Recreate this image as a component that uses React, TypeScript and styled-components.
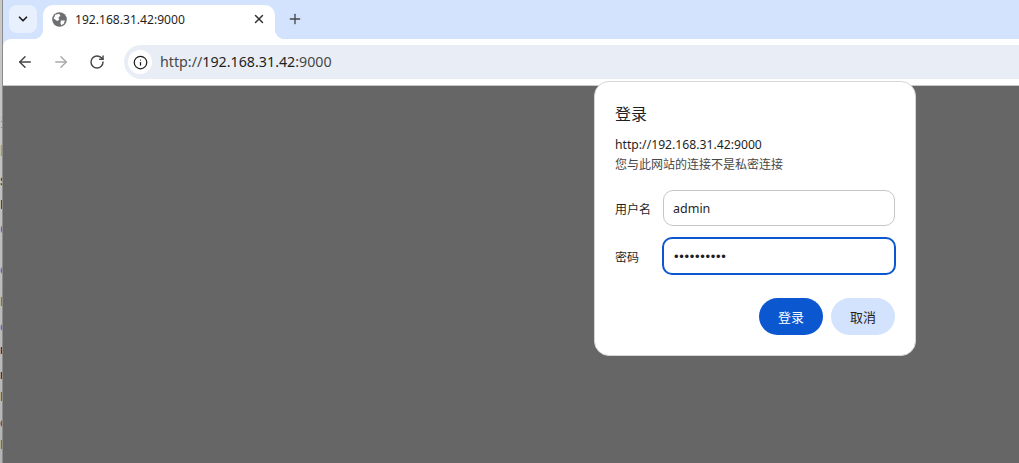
import React from 'react';
import styled, { createGlobalStyle } from 'styled-components';
import { ArrowLeft, ArrowRight, ChevronDown, Info, Plus, RotateCw, X } from 'lucide-react';

const GlobalStyle = createGlobalStyle`
  html, body {
    margin: 0;
    padding: 0;
    height: 100%;
    overflow: hidden;
    background: #666666;
    font-family: "Roboto", "Noto Sans CJK SC", "Liberation Sans", sans-serif;
  }
`;

const Screen = styled.div`
  position: relative;
  display: flex;
  width: 1019px;
  height: 463px;
  overflow: hidden;
`;

// sliver of the window behind the browser
const BackWindow = styled.div`
  width: 2px;
  flex: none;
  padding-top: 117px;
  display: flex;
  flex-direction: column;
  overflow: hidden;
  background: linear-gradient(#c9c9c9, #b4b4b4);
  border-right: 1px solid #8d8d8d;
`;

const BackGlyph = styled.span<{ $color: string; $gap: number }>`
  margin-top: ${(p) => p.$gap}px;
  font-size: 13px;
  line-height: 12px;
  height: 12px;
  color: ${(p) => p.$color};
`;

const Browser = styled.div`
  flex: 1;
  display: flex;
  flex-direction: column;
  min-width: 0;
  background: #d3e3fd;
`;

const TabStrip = styled.div`
  height: 39px;
  flex: none;
  display: flex;
  align-items: flex-end;
  padding-left: 6px;
`;

const TabSearch = styled.button`
  width: 28px;
  height: 28px;
  margin: 0 6px 6px 0;
  padding: 0;
  border: 0;
  border-radius: 8px;
  background: #e9f0fd;
  color: #1f1f1f;
  display: flex;
  align-items: center;
  justify-content: center;
`;

const Tab = styled.div`
  position: relative;
  width: 232px;
  height: 34px;
  box-sizing: border-box;
  padding: 0 9px 6px 9px;
  display: flex;
  align-items: center;
  background: #fff;
  border-radius: 10px 10px 0 0;

  &::before,
  &::after {
    content: '';
    position: absolute;
    bottom: 0;
    width: 10px;
    height: 10px;
  }
  &::before {
    right: 100%;
    background: radial-gradient(circle at 0 0, transparent 10px, #fff 10.5px);
  }
  &::after {
    left: 100%;
    background: radial-gradient(circle at 100% 0, transparent 10px, #fff 10.5px);
  }
`;

const TabTitle = styled.span`
  flex: 1;
  margin-left: 8px;
  font-size: 12.1px;
  color: #1f1f1f;
  font-family: "Noto Sans", "Open Sans", sans-serif;
`;

const NewTab = styled.div`
  margin: 0 0 6px 12px;
  height: 28px;
  display: flex;
  align-items: center;
  color: #444746;
`;

const Toolbar = styled.div`
  height: 47px;
  flex: none;
  box-sizing: border-box;
  display: flex;
  align-items: center;
  padding-left: 13px;
  background: #fff;
  border-top-left-radius: 8px;
  border-bottom: 1px solid #c8c8c8;
`;

const NavIcon = styled.div<{ $dim?: boolean }>`
  width: 18px;
  height: 18px;
  margin-right: 18px;
  display: flex;
  align-items: center;
  justify-content: center;
  color: ${(p) => (p.$dim ? '#a9abad' : '#444746')};
`;

const AddressBar = styled.div`
  flex: 1;
  height: 34px;
  display: flex;
  align-items: center;
  padding-left: 4px;
  background: #e9eef6;
  border-radius: 17px 0 0 17px;
`;

const SiteInfo = styled.div`
  width: 24px;
  height: 24px;
  border-radius: 50%;
  background: #fff;
  color: #1f1f1f;
  display: flex;
  align-items: center;
  justify-content: center;
`;

const Url = styled.span`
  margin: 0 0 2px 8px;
  font-size: 14.25px;
  color: #474747;
  font-family: "Noto Sans", "Open Sans", sans-serif;
`;

const UrlHost = styled.span`
  color: #1f1f1f;
`;

const Page = styled.div`
  flex: 1;
  background: #666666;
`;

const Dialog = styled.form`
  position: absolute;
  left: 594px;
  top: 81px;
  width: 322px;
  height: 275px;
  box-sizing: border-box;
  padding: 22px 20px 0 20px;
  background: #fff;
  border: 1px solid #d6d6d6;
  border-radius: 15px;
  display: flex;
  flex-direction: column;
`;

const DialogTitle = styled.div`
  font-size: 16px;
  line-height: 22px;
  color: #1f1f1f;
`;

const Origin = styled.div`
  margin-top: 11px;
  font-size: 12.2px;
  line-height: 16px;
  color: #1f1f1f;
  font-family: "Noto Sans", "Open Sans", sans-serif;
`;

const Notice = styled.div`
  margin-top: 4px;
  font-size: 12px;
  line-height: 16px;
  color: #474747;
`;

const Fields = styled.div`
  margin-top: 17px;
  display: flex;
  flex-direction: column;
  gap: 12px;
`;

const FieldRow = styled.label`
  display: flex;
  align-items: center;
  height: 36px;
`;

const FieldLabel = styled.span`
  width: 48px;
  flex: none;
  font-size: 12px;
  color: #1f1f1f;
`;

const Input = styled.div<{ $focused?: boolean }>`
  flex: 1;
  height: ${(p) => (p.$focused ? '38px' : '36px')};
  margin: ${(p) => (p.$focused ? '0 -1px' : '0')};
  box-sizing: border-box;
  display: flex;
  align-items: center;
  padding-left: ${(p) => (p.$focused ? '10px' : '9px')};
  border: ${(p) => (p.$focused ? '2px solid #0b57d0' : '1px solid #c4c7c5')};
  border-radius: 10px;
  font-size: 12.5px;
  color: #1f1f1f;
  font-family: "Noto Sans", "Open Sans", sans-serif;
`;

const PasswordDots = styled.span`
  font-size: 13px;
  letter-spacing: 0.7px;
  font-family: "Liberation Sans", sans-serif;
  color: #1f1f1f;
`;

const Actions = styled.div`
  margin-top: 24px;
  display: flex;
  justify-content: flex-end;
  gap: 8px;
`;

const Button = styled.button<{ $primary?: boolean }>`
  width: 64px;
  height: 37px;
  padding: 0;
  border: 0;
  border-radius: 19px;
  font-size: 13px;
  font-family: "Noto Sans CJK SC", sans-serif;
  background: ${(p) => (p.$primary ? '#0b57d0' : '#d3e3fd')};
  color: ${(p) => (p.$primary ? '#fff' : '#1f1f1f')};
`;

const backGlyphs: [string, string, number][] = [
  ['录', '#777', 0],
  ['|', '#a58a3a', 15],
  ['S', '#333', 20],
  ['I', '#222', 11],
  ['G', '#36c', 13],
  ['c', '#36c', 28],
  ['I', '#8a5a20', 20],
  ['c', '#36c', 13],
  ['n', '#315', 11],
  ['n', '#315', 13],
  ['E', '#8a4a10', 10],
  ['c', '#446', 14],
  ['F', '#8a5a20', 10],
];

function GlobeFavicon() {
  return (
    <svg width="15" height="15" viewBox="0 0 16 16">
      <circle cx="8" cy="8" r="7.8" fill="#6d6f72" />
      <path d="M3.5 2.8 L7.5 1.8 L9 4 L6.8 6.2 L7.8 8.2 L5.5 9.5 L1.8 7 Z" fill="#fff" />
      <path d="M9.5 9 L13.8 9 L12.5 12.5 L10 14.2 L9 12 Z" fill="#fff" />
    </svg>
  );
}

export default function App() {
  return (
    <Screen>
      <GlobalStyle />
      <BackWindow>
        {backGlyphs.map(([g, c, gap], i) => (
          <BackGlyph key={i} $color={c} $gap={gap}>
            {g}
          </BackGlyph>
        ))}
      </BackWindow>
      <Browser>
        <TabStrip>
          <TabSearch type="button">
            <ChevronDown size={14} strokeWidth={3} />
          </TabSearch>
          <Tab>
            <GlobeFavicon />
            <TabTitle>192.168.31.42:9000</TabTitle>
            <X size={14} strokeWidth={2.5} color="#333" />
          </Tab>
          <NewTab>
            <Plus size={16} strokeWidth={2} />
          </NewTab>
        </TabStrip>
        <Toolbar>
          <NavIcon>
            <ArrowLeft size={18} strokeWidth={2} />
          </NavIcon>
          <NavIcon $dim>
            <ArrowRight size={18} strokeWidth={2} />
          </NavIcon>
          <NavIcon>
            <RotateCw size={16} strokeWidth={2.2} />
          </NavIcon>
          <AddressBar>
            <SiteInfo>
              <Info size={15} strokeWidth={2} />
            </SiteInfo>
            <Url>
              http://<UrlHost>192.168.31.42</UrlHost>:9000
            </Url>
          </AddressBar>
        </Toolbar>
        <Page />
      </Browser>
      <Dialog>
        <DialogTitle>登录</DialogTitle>
        <Origin>http://192.168.31.42:9000</Origin>
        <Notice>您与此网站的连接不是私密连接</Notice>
        <Fields>
          <FieldRow>
            <FieldLabel>用户名</FieldLabel>
            <Input>admin</Input>
          </FieldRow>
          <FieldRow>
            <FieldLabel>密码</FieldLabel>
            <Input $focused>
              <PasswordDots>••••••••••</PasswordDots>
            </Input>
          </FieldRow>
        </Fields>
        <Actions>
          <Button type="button" $primary>
            登录
          </Button>
          <Button type="button">取消</Button>
        </Actions>
      </Dialog>
    </Screen>
  );
}
